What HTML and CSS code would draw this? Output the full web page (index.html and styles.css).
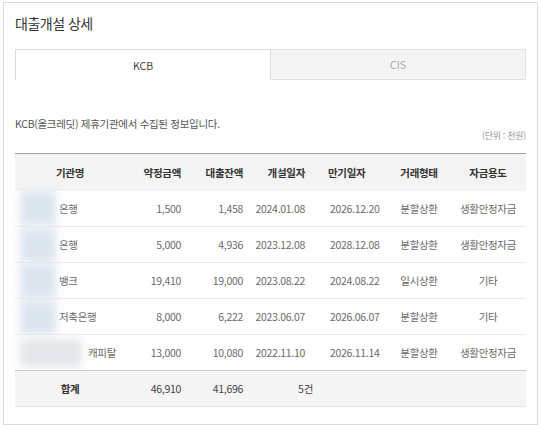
FILE: index.html
```html
<!DOCTYPE html>
<html lang="ko">
<head>
<meta charset="utf-8">
<link rel="stylesheet" href="styles.css">
</head>
<body>
<div class="panel">
  <h1 class="title">대출개설 상세</h1>
  <div class="tabs">
    <div class="tab active">KCB</div>
    <div class="tab">CIS</div>
  </div>
  <div class="info">
    <p class="note">KCB(올크레딧) 제휴기관에서 수집된 정보입니다.</p>
    <p class="unit">(단위 : 천원)</p>
  </div>
  <table class="grid">
    <colgroup>
      <col class="c1"><col class="c2"><col class="c3"><col class="c4"><col class="c5"><col class="c6"><col class="c7">
    </colgroup>
    <thead>
      <tr>
        <th class="ac">기관명</th>
        <th class="ar">약정금액</th>
        <th class="ar">대출잔액</th>
        <th class="ar">개설일자</th>
        <th class="al">만기일자</th>
        <th class="ac">거래형태</th>
        <th class="ac">자금용도</th>
      </tr>
    </thead>
    <tbody>
      <tr>
        <td class="name"><div class="nm"><span class="blur"></span><span>은행</span></div></td>
        <td class="ar">1,500</td><td class="ar">1,458</td>
        <td class="ar">2024.01.08</td><td class="al">2026.12.20</td>
        <td class="ac">분할상환</td><td class="ac">생활안정자금</td>
      </tr>
      <tr>
        <td class="name"><div class="nm"><span class="blur"></span><span>은행</span></div></td>
        <td class="ar">5,000</td><td class="ar">4,936</td>
        <td class="ar">2023.12.08</td><td class="al">2028.12.08</td>
        <td class="ac">분할상환</td><td class="ac">생활안정자금</td>
      </tr>
      <tr>
        <td class="name"><div class="nm"><span class="blur"></span><span>뱅크</span></div></td>
        <td class="ar">19,410</td><td class="ar">19,000</td>
        <td class="ar">2023.08.22</td><td class="al">2024.08.22</td>
        <td class="ac">일시상환</td><td class="ac">기타</td>
      </tr>
      <tr>
        <td class="name"><div class="nm"><span class="blur"></span><span>저축은행</span></div></td>
        <td class="ar">8,000</td><td class="ar">6,222</td>
        <td class="ar">2023.06.07</td><td class="al">2026.06.07</td>
        <td class="ac">분할상환</td><td class="ac">기타</td>
      </tr>
      <tr>
        <td class="name"><div class="nm"><span class="blur wide"></span><span>캐피탈</span></div></td>
        <td class="ar">13,000</td><td class="ar">10,080</td>
        <td class="ar">2022.11.10</td><td class="al">2026.11.14</td>
        <td class="ac">분할상환</td><td class="ac">생활안정자금</td>
      </tr>
    </tbody>
    <tfoot>
      <tr>
        <td class="ac strong">합계</td>
        <td class="ar">46,910</td><td class="ar">41,696</td>
        <td class="ar count">5건</td><td></td><td></td><td></td>
      </tr>
    </tfoot>
  </table>
</div>
</body>
</html>
```

FILE: styles.css
```css
* { box-sizing: border-box; }
html, body { margin: 0; padding: 0; background: #fff; }
body {
  font-family: "Noto Sans CJK KR", "Noto Sans", sans-serif;
  color: #555;
}
.panel {
  margin: 2px 3px 0;
  height: 423px;
  border: 1px solid #dcdcdc;
  padding: 10px 11px 0;
}
.title {
  margin: 0;
  font-size: 14px;
  line-height: 20px;
  font-weight: 400;
  color: #333;
  letter-spacing: -0.5px;
}
.tabs {
  display: flex;
  margin-top: 16px;
  height: 31px;
}
.tab {
  flex: 1;
  display: flex;
  align-items: center;
  justify-content: center;
  font-size: 10.5px;
  color: #aaa;
  background: #f4f4f4;
  border: 1px solid #e2e2e2;
  border-left: 0;
}
.tab.active {
  background: #fff;
  color: #444;
  border: 1px solid #dcdcdc;
  border-bottom: 0;
}
.info {
  display: flex;
  justify-content: space-between;
  height: 26px;
  margin-top: 36px;
}
.note {
  margin: 0;
  font-size: 10.5px;
  line-height: 16px;
  color: #555;
  letter-spacing: -0.3px;
}
.unit {
  margin: 0;
  align-self: flex-end;
  font-size: 9px;
  line-height: 12px;
  color: #999;
  letter-spacing: -0.3px;
}
.grid {
  margin-top: 11px;
  width: 511px;
  border-collapse: collapse;
  table-layout: fixed;
  border-top: 1px solid #a0a0a0;
  font-size: 10.5px;
  letter-spacing: -0.3px;
}
.c1 { width: 110px; }
.c2 { width: 64px; }
.c3 { width: 62px; }
.c4 { width: 62px; }
.c5 { width: 75px; }
.c6 { width: 62px; }
.c7 { width: 76px; }
.grid th {
  height: 37px;
  padding: 0;
  background: #f4f4f4;
  color: #333;
  font-weight: 700;
  font-size: 10.5px;
}
.grid td {
  height: 36px;
  padding: 0;
  color: #6a6a6a;
  border-bottom: 1px solid #ececec;
  white-space: nowrap;
}
.grid tbody tr:last-child td { border-bottom: 1px solid #c8c8c8; }
.grid tfoot td {
  background: #f5f5f5;
  color: #444;
  border-bottom: 1px solid #e4e4e4;
}
.ac { text-align: center; }
.ar { text-align: right; padding-right: 8px !important; }
.al { text-align: left; padding-left: 17px !important; }
th.al { padding-left: 15px !important; }
.grid td.count { padding-right: 0 !important; }
.grid td.strong { font-weight: 700; color: #333; }
.name { padding-left: 5px !important; }
.nm {
  display: flex;
  align-items: center;
  gap: 3px;
  height: 20px;
}
.blur {
  flex: none;
  width: 36px;
  height: 34px;
  background: #dde5ef;
  filter: blur(4px);
}
.blur.wide {
  width: 62px;
  height: 28px;
  margin-right: 3px;
  background: #e4e7eb;
}
```
